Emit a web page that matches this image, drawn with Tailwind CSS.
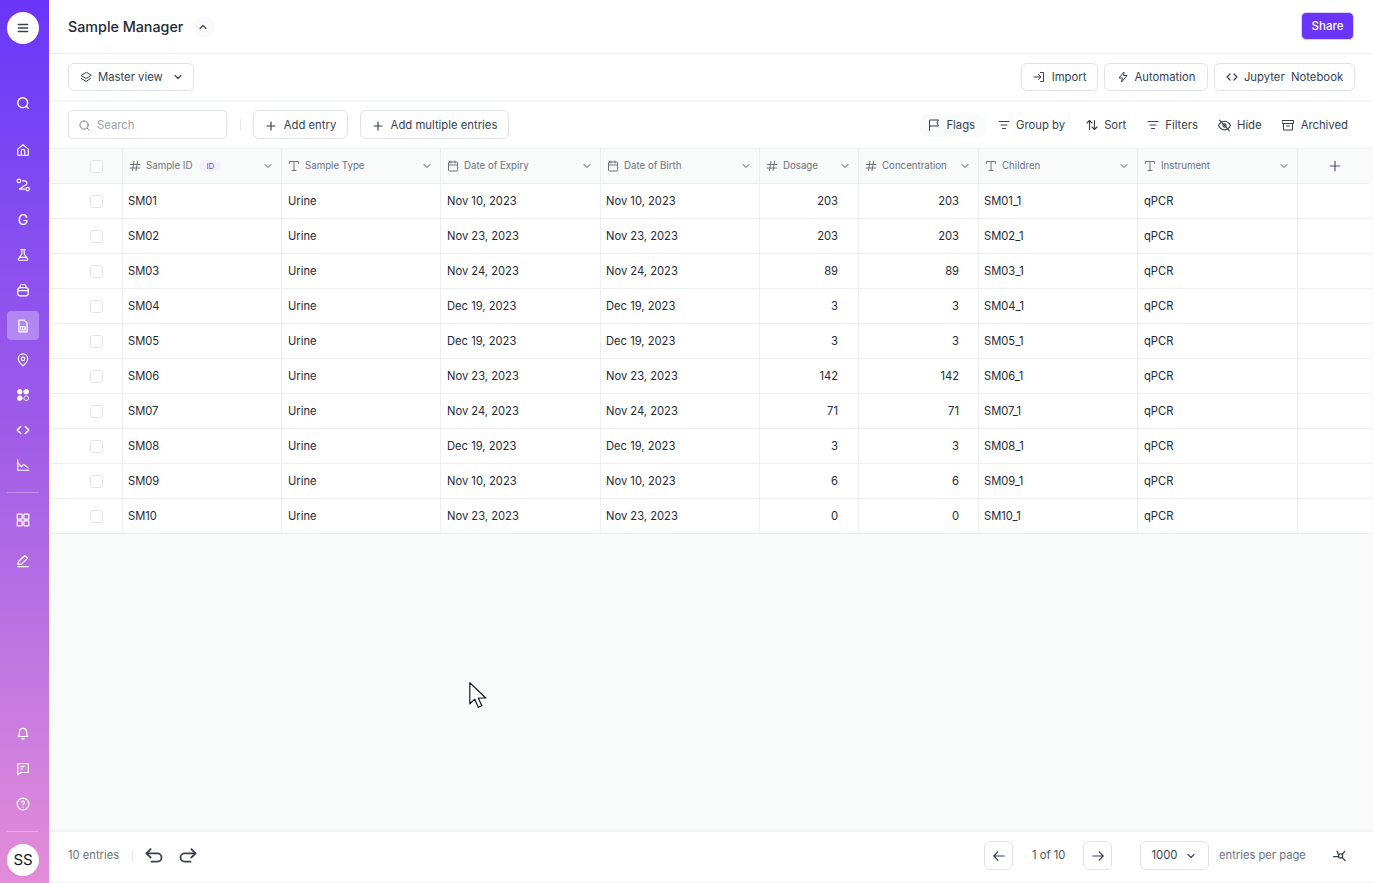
<!DOCTYPE html>
<html lang="en">
<head>
<meta charset="UTF-8">
<title>Sample Manager</title>
<script src="https://cdn.jsdelivr.net/npm/@tailwindcss/browser@4"></script>
</head>
<body class="font-['Inter',sans-serif] bg-white text-[#1f2937] overflow-hidden">
<div class="relative flex h-[883px] w-[1373px]">

  <!-- sidebar -->
  <aside class="w-[49px] shrink-0 pr-[3px] flex flex-col items-center text-white bg-gradient-to-b from-[#6a35f8] via-[#a15ce8] to-[#e48cd8]">
    <button class="mt-3 w-8 h-8 rounded-full bg-white flex items-center justify-center text-[#374151]">
      <svg class="w-3.5 h-3.5" viewBox="0 0 24 24" fill="none" stroke="currentColor" stroke-width="2.2" stroke-linecap="round"><path d="M4 6h16M4 12h16M4 18h16"/></svg>
    </button>
    <svg class="w-3.5 h-3.5 mt-[52px]" viewBox="0 0 24 24" fill="none" stroke="currentColor" stroke-width="2.4" stroke-linecap="round"><circle cx="11.5" cy="11.5" r="8.5"/><path d="M18 18l3 3"/></svg>
    <svg class="w-3.5 h-3.5 mt-[33px]" viewBox="0 0 24 24" fill="none" stroke="currentColor" stroke-width="2" stroke-linejoin="round"><path d="M3 10.5 12 3l9 7.5V21H3z"/><path d="M9 21v-7a3 3 0 0 1 6 0v7"/></svg>
    <svg class="w-3.5 h-3.5 mt-[21px]" viewBox="0 0 24 24" fill="none" stroke="currentColor" stroke-width="2" stroke-linecap="round" stroke-linejoin="round"><circle cx="5" cy="5" r="3"/><circle cx="20" cy="19" r="3"/><path d="M11 5h4a3.500 3.500 0 0 1 2 6.500L6 19h9"/></svg>
    <div class="mt-[19px] h-[18px] text-[14px] leading-[18px]">G</div>
    <svg class="w-3.5 h-3.5 mt-[19px]" viewBox="0 0 24 24" fill="none" stroke="currentColor" stroke-width="2" stroke-linejoin="round" stroke-linecap="round"><path d="M8 3h8M10 3v7l-6 9a1.500 1.500 0 0 0 1 2h14a1.500 1.500 0 0 0 1-2l-6-9V3"/><path d="M6 16h12"/></svg>
    <svg class="w-3.5 h-3.5 mt-[21px]" viewBox="0 0 24 24" fill="none" stroke="currentColor" stroke-width="2" stroke-linejoin="round" stroke-linecap="round"><path d="M7 8V5a2 2 0 0 1 2-2h6a2 2 0 0 1 2 2v3"/><rect x="3" y="8" width="18" height="14" rx="4"/><path d="M3 13h18"/></svg>
    <div class="mt-[14px] w-8 h-[29px] rounded bg-white/30 flex items-center justify-center">
      <svg class="w-3.5 h-3.5" viewBox="0 0 24 24" fill="none" stroke="currentColor" stroke-width="2" stroke-linejoin="round"><path d="M5 2h9l5 5v15H5z"/><path d="M8 13h8v6H8zM11 13v6M14 13v6" stroke-width="1.5"/></svg>
    </div>
    <svg class="w-3.5 h-3.5 mt-[13px]" viewBox="0 0 24 24" fill="none" stroke="currentColor" stroke-width="2" stroke-linejoin="round"><path d="M12 22s-8-6.500-8-12.500a8 8 0 0 1 16 0C20 15.500 12 22 12 22z"/><circle cx="12" cy="10" r="3"/></svg>
    <svg class="w-3.5 h-3.5 mt-[21px]" viewBox="0 0 24 24" fill="currentColor" stroke="currentColor" stroke-width="1.5"><circle cx="6.500" cy="6.500" r="4"/><circle cx="17.500" cy="6.500" r="4"/><circle cx="6.500" cy="17.500" r="4"/><circle cx="17.500" cy="17.500" r="4" fill="none"/></svg>
    <svg class="w-3.5 h-3.5 mt-[21px]" viewBox="0 0 24 24" fill="none" stroke="currentColor" stroke-width="2.4" stroke-linecap="round" stroke-linejoin="round"><path d="M8 6l-6 6 6 6M16 6l6 6-6 6"/></svg>
    <svg class="w-3.5 h-3.5 mt-[21px]" viewBox="0 0 24 24" fill="none" stroke="currentColor" stroke-width="2" stroke-linecap="round" stroke-linejoin="round"><path d="M3 3v18h19"/><path d="M3 8l6 7 4-4 8 6"/></svg>
    <div class="mt-[20px] w-8 h-px bg-white/30"></div>
    <svg class="w-3.5 h-3.5 mt-[20px]" viewBox="0 0 24 24" fill="none" stroke="currentColor" stroke-width="2"><rect x="2" y="2" width="8.500" height="8.500" rx="1"/><rect x="13.500" y="2" width="8.500" height="8.500" rx="1"/><rect x="2" y="13.500" width="8.500" height="8.500" rx="1"/><rect x="13.500" y="13.500" width="8.500" height="8.500" rx="1"/></svg>
    <svg class="w-3.5 h-3.5 mt-[27px]" viewBox="0 0 24 24" fill="none" stroke="currentColor" stroke-width="2" stroke-linecap="round" stroke-linejoin="round"><path d="M3 18l2-6L15 3l5 4-10 10z"/><path d="M3 21.500h18"/></svg>

    <div class="mt-auto flex flex-col items-center">
      <svg class="w-3.5 h-3.5" viewBox="0 0 24 24" fill="none" stroke="currentColor" stroke-width="2" stroke-linecap="round" stroke-linejoin="round"><path d="M4 18c2-2 2-4 2-8a6 6 0 0 1 12 0c0 4 0 6 2 8z"/><path d="M10 22h4"/></svg>
      <svg class="w-3.5 h-3.5 mt-[22px]" viewBox="0 0 24 24" fill="none" stroke="currentColor" stroke-width="2" stroke-linecap="round" stroke-linejoin="round"><path d="M3 3h18v15H8l-5 4z"/><path d="M8 8h6M8 12h3"/></svg>
      <svg class="w-3.5 h-3.5 mt-[21px]" viewBox="0 0 24 24" fill="none" stroke="currentColor" stroke-width="2" stroke-linecap="round" stroke-linejoin="round"><circle cx="12" cy="12" r="10"/><path d="M9.500 9.500a2.500 2.500 0 1 1 3.500 2.300c-.7.400-1 1-1 1.700M12 17.500v.01"/></svg>
      <div class="mt-[20px] w-8 h-px bg-white/30"></div>
      <div class="mt-3 mb-[7px] w-8 h-8 rounded-full bg-white text-[#111827] text-[15px] flex items-center justify-center">SS</div>
    </div>
  </aside>

  <main class="flex-1 min-w-0 flex flex-col">
    <!-- title -->
    <header class="h-[54px] shrink-0 border-b border-[#eceeef] flex items-center pl-[19px] pr-[19px]">
      <h1 class="pt-px text-[14.300px] font-medium text-[#1f2937]">Sample Manager</h1>
      <button class="ml-[11px] w-[21px] h-5 pr-1 rounded-full bg-[#f8f9fa] flex items-center justify-center text-[#374151]">
        <svg class="w-3 h-3" viewBox="0 0 24 24" fill="none" stroke="currentColor" stroke-width="2.2" stroke-linecap="round" stroke-linejoin="round"><path d="M6 15l6-6 6 6"/></svg>
      </button>
      <button class="ml-auto mb-px pt-px h-[28px] w-[53px] rounded-[5px] bg-[#6a35f8] text-white text-[11.500px] font-medium border border-[#dcd0fb]">Share</button>
    </header>

    <!-- view bar -->
    <div class="h-[48px] shrink-0 border-b-2 border-[#f3f4f5] flex items-center pl-[19px] pr-[18px] text-[11.300px] text-[#374151]">
      <button class="h-7 w-[126px] rounded-md border border-[#dfe3e5] flex items-center pl-[11px] gap-[6px]">
        <svg class="w-3 h-3" viewBox="0 0 24 24" fill="none" stroke="currentColor" stroke-width="2" stroke-linejoin="round" stroke-linecap="round"><path d="M12 3 2 9l10 6 10-6zM3 15l9 6 9-6"/></svg>
        <span>Master view</span>
        <svg class="w-3 h-3 ml-[3px]" viewBox="0 0 24 24" fill="none" stroke="currentColor" stroke-width="2.200" stroke-linecap="round" stroke-linejoin="round"><path d="M6 9l6 6 6-6"/></svg>
      </button>
      <button class="ml-auto h-7 w-[77px] rounded-md border border-[#dfe3e5] flex items-center justify-center gap-[7px]">
        <svg class="w-3 h-3" viewBox="0 0 24 24" fill="none" stroke="currentColor" stroke-width="2" stroke-linejoin="round" stroke-linecap="round"><path d="M2 12h13M11 7l5 5-5 5M15 3h6v18h-6"/></svg>
        <span>Import</span>
      </button>
      <button class="ml-[6px] h-7 w-[104px] rounded-md border border-[#dfe3e5] flex items-center justify-center gap-[6px]">
        <svg class="w-3 h-3" viewBox="0 0 24 24" fill="none" stroke="currentColor" stroke-width="2" stroke-linejoin="round"><path d="M14 2 4 14h7l-2 8 11-13h-7z"/></svg>
        <span>Automation</span>
      </button>
      <button class="ml-[6px] h-7 w-[141px] rounded-md border border-[#dfe3e5] flex items-center justify-center gap-[6px]">
        <svg class="w-3 h-3" viewBox="0 0 24 24" fill="none" stroke="currentColor" stroke-width="2.400" stroke-linejoin="round" stroke-linecap="round"><path d="M8 6l-6 6 6 6M16 6l6 6-6 6"/></svg>
        <span>Jupyter&nbsp; Notebook</span>
      </button>
    </div>

    <!-- filter bar -->
    <div class="h-[46px] shrink-0 pb-px flex items-center pl-[19px] pr-[25px] text-[11.300px] text-[#374151]">
      <div class="h-[29px] w-[159px] pt-[2px] rounded border border-[#dfe3e5] flex items-center pl-[10px] gap-[7px] text-[#9ca3af]">
        <svg class="w-[11px] h-[11px]" viewBox="0 0 24 24" fill="none" stroke="#6b7280" stroke-width="2" stroke-linecap="round"><circle cx="11" cy="11" r="9"/><path d="M18 18l4 4"/></svg>
        <span>Search</span>
      </div>
      <div class="ml-[13px] w-px h-3 bg-[#e5e7eb]"></div>
      <button class="ml-3 h-[29px] w-[95px] pt-[2px] rounded-md border border-[#dfe3e5] flex items-center justify-center gap-[7px]">
        <svg class="w-3 h-3" viewBox="0 0 24 24" fill="none" stroke="currentColor" stroke-width="2.400" stroke-linecap="round"><path d="M12 4v16M4 12h16"/></svg>
        <span>Add entry</span>
      </button>
      <button class="ml-3 h-[29px] w-[149px] pt-[2px] rounded-md border border-[#dfe3e5] flex items-center justify-center gap-[7px]">
        <svg class="w-3 h-3" viewBox="0 0 24 24" fill="none" stroke="currentColor" stroke-width="2.400" stroke-linecap="round"><path d="M12 4v16M4 12h16"/></svg>
        <span>Add multiple entries</span>
      </button>
      <div class="ml-auto pt-px flex items-center">
        <div class="h-[23px] flex items-center gap-[6px] pl-2 pr-[11px] rounded-lg bg-[#f9fafa]">
          <svg class="w-3 h-3" viewBox="0 0 24 24" fill="none" stroke="currentColor" stroke-width="2" stroke-linejoin="round" stroke-linecap="round"><path d="M3 23V2h18l-3 6 3 6H3"/></svg><span>Flags</span>
        </div>
        <div class="ml-3 flex items-center gap-[6px]">
          <svg class="w-3 h-3" viewBox="0 0 24 24" fill="none" stroke="currentColor" stroke-width="2.200" stroke-linecap="round"><path d="M2 5h20M6 12h12M9 19h6"/></svg><span>Group by</span>
        </div>
        <div class="ml-[21px] flex items-center gap-[6px]">
          <svg class="w-3 h-3" viewBox="0 0 24 24" fill="none" stroke="currentColor" stroke-width="2.200" stroke-linecap="round" stroke-linejoin="round"><path d="M7 21V3M2 8l5-5 5 5"/><path d="M17 3v18M12 16l5 5 5-5"/></svg><span>Sort</span>
        </div>
        <div class="ml-[21px] flex items-center gap-[6px]">
          <svg class="w-3 h-3" viewBox="0 0 24 24" fill="none" stroke="currentColor" stroke-width="2.200" stroke-linecap="round"><path d="M2 5h20M6 12h12M9 19h6"/></svg><span>Filters</span>
        </div>
        <div class="ml-5 flex items-center gap-[6px]">
          <svg class="w-[13px] h-[13px]" viewBox="0 0 24 24" fill="none" stroke="currentColor" stroke-width="2" stroke-linecap="round" stroke-linejoin="round"><path d="M1 12s4-8 11-8 11 8 11 8-4 8-11 8-11-8-11-8z"/><circle cx="12" cy="12" r="3"/><path d="M3 2l18 20"/></svg><span>Hide</span>
        </div>
        <div class="ml-5 flex items-center gap-[7px]">
          <svg class="w-3 h-3" viewBox="0 0 24 24" fill="none" stroke="currentColor" stroke-width="2" stroke-linecap="round" stroke-linejoin="round"><path d="M1 3h22v6H1zM3 9v13h18V9M9 14h6"/></svg><span>Archived</span>
        </div>
      </div>
    </div>

    <!-- table -->
    <div class="flex-1 min-h-0 bg-[#f9fafa] border-t border-l border-t-[#f0f1f2] border-l-white">
      <div id="grid" class="grid grid-cols-[73px_159px_159px_160px_159px_99px_120px_159px_160px_73px] auto-rows-[35px] text-[11.200px] text-[#1f2937]"></div>
    </div>

    <!-- footer -->
    <footer class="h-[53px] shrink-0 pb-[3px] border-t-2 border-b border-[#f0f1f2] flex items-center pl-[19px] pr-[26px] text-[11.200px] text-[#6b7280]">
      <span>10 entries</span>
      <div class="ml-[13px] w-px h-3 bg-[#e5e7eb]"></div>
      <svg class="ml-[11px] mb-px w-5 h-5 text-[#374151]" viewBox="0 0 24 24" fill="none" stroke="currentColor" stroke-width="2.200" stroke-linecap="round" stroke-linejoin="round"><path d="M8 5 3 10l5 5"/><path d="M3 10h13a5 5 0 0 1 0 10H9"/></svg>
      <svg class="ml-[14px] mb-px w-5 h-5 text-[#374151]" viewBox="0 0 24 24" fill="none" stroke="currentColor" stroke-width="2.200" stroke-linecap="round" stroke-linejoin="round"><path d="M16 5l5 5-5 5"/><path d="M21 10H8a5 5 0 0 0 0 10h7"/></svg>
      <button class="ml-auto w-[29px] h-[29px] rounded-md border border-[#dfe3e5] flex items-center justify-center text-[#374151]">
        <svg class="w-3.5 h-3.5" viewBox="0 0 24 24" fill="none" stroke="currentColor" stroke-width="2" stroke-linecap="round" stroke-linejoin="round"><path d="M21 12H3M10 5l-7 7 7 7"/></svg>
      </button>
      <span class="ml-[19px] w-[34px] whitespace-nowrap text-[#4b5563]">1 of 10</span>
      <button class="ml-[17px] w-[29px] h-[29px] rounded-md border border-[#dfe3e5] flex items-center justify-center text-[#374151]">
        <svg class="w-3.5 h-3.5" viewBox="0 0 24 24" fill="none" stroke="currentColor" stroke-width="2" stroke-linecap="round" stroke-linejoin="round"><path d="M3 12h18M14 5l7 7-7 7"/></svg>
      </button>
      <button class="ml-[28px] w-[69px] h-[29px] rounded-md border border-[#dfe3e5] flex items-center justify-center gap-2 text-[#374151] text-[11.300px]">
        <span>1000</span>
        <svg class="w-3 h-3" viewBox="0 0 24 24" fill="none" stroke="currentColor" stroke-width="2.200" stroke-linecap="round" stroke-linejoin="round"><path d="M6 9l6 6 6-6"/></svg>
      </button>
      <span class="ml-[10px] w-[86px] whitespace-nowrap text-[#6b7280]">entries per page</span>
      <svg class="ml-[28px] w-3.5 h-3.5 text-[#374151]" viewBox="0 0 24 24" fill="none" stroke="currentColor" stroke-width="2.200" stroke-linecap="round"><circle cx="13" cy="12" r="3.500"/><path d="M1 13h8M9 9 7 4M16 9l4-5M16 15l5 5"/></svg>
    </footer>
  </main>

  <!-- mouse pointer, lies over the empty table area -->
  <svg class="absolute left-[469px] top-[682px] w-[19px] h-[28px]" viewBox="0 0 19 28" fill="white" stroke="#111827" stroke-width="1.200" stroke-linejoin="round"><path d="M.8.8v21l5-4.500 3.500 8 3.500-1.500-3.500-7.800h7.500z"/></svg>
</div>

<script>
  const icons = {
    hash: '<svg class="w-3 h-3 shrink-0 text-[#6b7280]" viewBox="0 0 24 24" fill="none" stroke="currentColor" stroke-width="2" stroke-linecap="round"><path d="M3 9h19M2 16h19M10 3 7 21M17 3l-3 18"/></svg>',
    text: '<svg class="w-3 h-3 shrink-0 text-[#6b7280]" viewBox="0 0 24 24" fill="none" stroke="currentColor" stroke-width="2" stroke-linecap="round"><path d="M3 7V3h18v4M12 3v18M8 21h8"/></svg>',
    date: '<svg class="w-3 h-3 shrink-0 text-[#6b7280]" viewBox="0 0 24 24" fill="none" stroke="currentColor" stroke-width="2" stroke-linecap="round"><rect x="3" y="4" width="18" height="18" rx="2"/><path d="M3 10h18M8 2v4M16 2v4"/></svg>'
  };
  const chevron = '<svg class="ml-auto w-3 h-3 shrink-0 text-[#4b5563]" viewBox="0 0 24 24" fill="none" stroke="currentColor" stroke-width="2" stroke-linecap="round" stroke-linejoin="round"><path d="M6 9l6 6 6-6"/></svg>';
  const checkbox = '<span class="w-[13px] h-[13px] rounded-[3px] border border-[#e2e5e7] bg-white"></span>';

  const columns = [
    ['hash', 'Sample ID'], ['text', 'Sample Type'], ['date', 'Date of Expiry'], ['date', 'Date of Birth'],
    ['hash', 'Dosage'], ['hash', 'Concentration'], ['text', 'Children'], ['text', 'Instrument']
  ];
  const rows = [
    ['SM01', 'Nov 10, 2023', '203'], ['SM02', 'Nov 23, 2023', '203'], ['SM03', 'Nov 24, 2023', '89'],
    ['SM04', 'Dec 19, 2023', '3'], ['SM05', 'Dec 19, 2023', '3'], ['SM06', 'Nov 23, 2023', '142'],
    ['SM07', 'Nov 24, 2023', '71'], ['SM08', 'Dec 19, 2023', '3'], ['SM09', 'Nov 10, 2023', '6'],
    ['SM10', 'Nov 23, 2023', '0']
  ];

  const border = 'border-b border-r border-[#eceeef]';
  let html = `<div class="flex items-center pl-[40px] ${border}">${checkbox}</div>`;
  columns.forEach(([icon, label]) => {
    const badge = label === 'Sample ID' ? '<span class="ml-[2px] px-[7px] rounded-full bg-[#f5f0fd] text-[#7e3fc9] text-[8px] leading-[12px]">ID</span>' : '';
    html += `<div class="flex items-center pl-[6px] pr-[7px] gap-[5px] ${border} text-[9.700px] text-[#6b7280]">${icons[icon]}<span>${label}</span>${badge}${chevron}</div>`;
  });
  html += '<div class="flex items-center justify-center border-b border-[#eceeef] text-[#4b5563]"><svg class="w-3.5 h-3.5" viewBox="0 0 24 24" fill="none" stroke="currentColor" stroke-width="2" stroke-linecap="round"><path d="M12 4v16M4 12h16"/></svg></div>';

  const left = `flex items-center bg-white pl-[6px] ${border}`;
  const tight = `flex items-center bg-white pl-[5px] ${border}`;
  const dosage = `flex items-center justify-end bg-white pr-[20px] ${border}`;
  const conc = `flex items-center justify-end bg-white pr-[19px] ${border}`;
  rows.forEach(([id, date, num]) => {
    html += `<div class="flex items-center pl-[40px] bg-white ${border}">${checkbox}</div>`;
    html += `<div class="${tight}">${id}</div><div class="${left}">Urine</div>`;
    html += `<div class="${left}">${date}</div><div class="${tight}">${date}</div>`;
    html += `<div class="${dosage}">${num}</div><div class="${conc}">${num}</div>`;
    html += `<div class="${tight}">${id}_1</div><div class="${left}">qPCR</div>`;
    html += '<div class="bg-white border-b border-[#eceeef]"></div>';
  });
  document.getElementById('grid').innerHTML = html;
</script>
</body>
</html>
